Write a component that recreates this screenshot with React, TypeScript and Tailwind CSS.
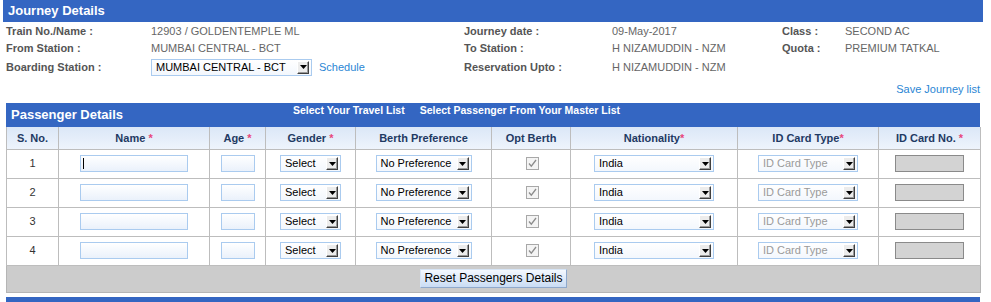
import React from "react";

const font = "font-['Liberation_Sans',Arial,sans-serif]";

function Arrow() {
  return (
    <div className="w-[12px] h-[13px] mr-[2px] flex items-center justify-center bg-[#ececec] border-t border-l border-t-white border-l-white border-r border-b border-r-[#404040] border-b-[#404040] shadow-[inset_-1px_-1px_0_#9a9a9a]">
      <svg width="7" height="4" viewBox="0 0 7 4">
        <path d="M0 0 H7 L3.5 4 Z" fill="#000" />
      </svg>
    </div>
  );
}

function Sel({ text, cls, muted }: { text: string; cls: string; muted?: boolean }) {
  return (
    <div className={`${cls} h-[17px] flex items-center border border-[#aacbef] bg-gradient-to-b from-white to-[#f3f7fd]`}>
      <span className={`flex-1 pl-[4px] text-[11px] leading-[13px] whitespace-nowrap overflow-hidden ${muted ? "text-[#9a9a9a]" : "text-black"}`}>{text}</span>
      <Arrow />
    </div>
  );
}

function TextIn({ cls, caret }: { cls: string; caret?: boolean }) {
  return (
    <div className={`${cls} h-[17px] border border-[#aacbef] bg-gradient-to-b from-white to-[#eaf1fb] flex items-center`}>
      {caret && <div className="ml-[2px] w-[1px] h-[11px] bg-black" />}
    </div>
  );
}

function Check() {
  return (
    <svg width="13" height="13" viewBox="0 0 13 13">
      <rect x="0.5" y="0.5" width="12" height="12" fill="#f4f4f4" stroke="#a8a8a8" />
      <path d="M3 6.5 L5.3 9.2 L10 3" fill="none" stroke="#8c8c8c" strokeWidth="1.3" />
    </svg>
  );
}

const Star = () => <span className="text-[#e8467c] font-bold">*</span>;

export default function App() {
  const rows = [1, 2, 3, 4];
  const label = "text-[11px] font-bold text-[#555]";
  const val = "text-[11px] text-[#666]";
  const th = "border border-[#bdbdbd] text-[11px] font-bold text-[#1f3a63] text-center p-0";
  const td = "border border-[#bdbdbd] p-0";
  return (
    <div className={`w-[991px] h-[302px] overflow-hidden bg-white ${font}`}>
      <div className="ml-[3px] w-[980px] h-[22px] bg-[#3466c2] text-white font-bold text-[13px] leading-[22px] pl-[5px]">
        Journey Details
      </div>
      <div className="pl-[6px] pt-[1px] grid grid-cols-[145px_313px_148px_170px_63px_1fr] grid-rows-[17px_17px_20px] items-center">
        <div className={label}>Train No./Name :</div>
        <div className={val}>12903 / GOLDENTEMPLE ML</div>
        <div className={label}>Journey date :</div>
        <div className={val}>09-May-2017</div>
        <div className={label}>Class :</div>
        <div className={val}>SECOND AC</div>

        <div className={label}>From Station :</div>
        <div className={val}>MUMBAI CENTRAL - BCT</div>
        <div className={label}>To Station :</div>
        <div className={val}>H NIZAMUDDIN - NZM</div>
        <div className={label}>Quota :</div>
        <div className={val}>PREMIUM TATKAL</div>

        <div className={label}>Boarding Station :</div>
        <div className="flex items-center gap-[7px]">
          <Sel text="MUMBAI CENTRAL - BCT" cls="w-[161px]" />
          <span className="text-[11px] text-[#2a86d4]">Schedule</span>
        </div>
        <div className={label}>Reservation Upto :</div>
        <div className={val}>H NIZAMUDDIN - NZM</div>
        <div />
        <div />
      </div>
      <div className="mt-[6px] w-[980px] h-[13px] text-right text-[11px] leading-[13px] text-[#2a86d4]">Save Journey list</div>

      <div className="ml-[6px] mt-[7px] w-[974px]">
        <div className="h-[24px] bg-[#3466c2] flex text-white font-bold">
          <div className="w-[287px] pl-[5px] self-center text-[13px] leading-[16px]">Passenger Details</div>
          <div className="flex gap-[15px] pt-[1px] text-[10.5px] leading-[12px]">
            <span>Select Your Travel List</span>
            <span>Select Passenger From Your Master List</span>
          </div>
        </div>
        <table className="w-[974px] border-collapse table-fixed">
          <colgroup>
            <col className="w-[52px]" />
            <col className="w-[151px]" />
            <col className="w-[56px]" />
            <col className="w-[90px]" />
            <col className="w-[136px]" />
            <col className="w-[79px]" />
            <col className="w-[167px]" />
            <col className="w-[141px]" />
            <col className="w-[102px]" />
          </colgroup>
          <thead>
            <tr className="h-[22px] bg-gradient-to-b from-[#dbe7f7] to-[#eef4fc] border-t-0">
              <th className={`${th} border-t-0`}>S. No.</th>
              <th className={`${th} border-t-0`}>Name <Star /></th>
              <th className={`${th} border-t-0`}>Age <Star /></th>
              <th className={`${th} border-t-0`}>Gender <Star /></th>
              <th className={`${th} border-t-0`}>Berth Preference</th>
              <th className={`${th} border-t-0`}>Opt Berth</th>
              <th className={`${th} border-t-0`}>Nationality<Star /></th>
              <th className={`${th} border-t-0`}>ID Card Type<Star /></th>
              <th className={`${th} border-t-0`}>ID Card No. <Star /></th>
            </tr>
          </thead>
          <tbody>
            {rows.map((n) => (
              <tr key={n} className="h-[29px]">
                <td className={`${td} text-center text-[11px] text-[#333]`}>{n}</td>
                <td className={td}>
                  <div className="flex justify-center"><TextIn cls="w-[108px]" caret={n === 1} /></div>
                </td>
                <td className={td}>
                  <div className="flex justify-center"><TextIn cls="w-[34px]" /></div>
                </td>
                <td className={td}>
                  <div className="flex justify-center"><Sel text="Select" cls="w-[61px]" /></div>
                </td>
                <td className={td}>
                  <div className="flex justify-center"><Sel text="No Preference" cls="w-[96px]" /></div>
                </td>
                <td className={td}>
                  <div className="flex justify-center pl-[2px]"><Check /></div>
                </td>
                <td className={td}>
                  <div className="flex justify-center"><Sel text="India" cls="w-[120px]" /></div>
                </td>
                <td className={td}>
                  <div className="flex justify-center"><Sel text="ID Card Type" cls="w-[100px]" muted /></div>
                </td>
                <td className={td}>
                  <div className="flex justify-center pr-[1px]">
                    <div className="w-[69px] h-[17px] bg-[#d3d3d3] border border-[#8a8a8a]" />
                  </div>
                </td>
              </tr>
            ))}
            <tr className="h-[27px] bg-[#cccccc]">
              <td colSpan={9} className="border border-[#b5b5b5] p-0">
                <div className="flex justify-center">
                  <button className="w-[147px] h-[19px] border border-[#8fa9cc] border-t-[#d6e4f5] border-l-[#d6e4f5] bg-gradient-to-b from-[#f4f8fe] to-[#c9dcf4] text-[12px] leading-[17px] text-black">
                    Reset Passengers Details
                  </button>
                </div>
              </td>
            </tr>
          </tbody>
        </table>
        <div className="mt-[4px] h-[10px] bg-[#3466c2]" />
      </div>
    </div>
  );
}
